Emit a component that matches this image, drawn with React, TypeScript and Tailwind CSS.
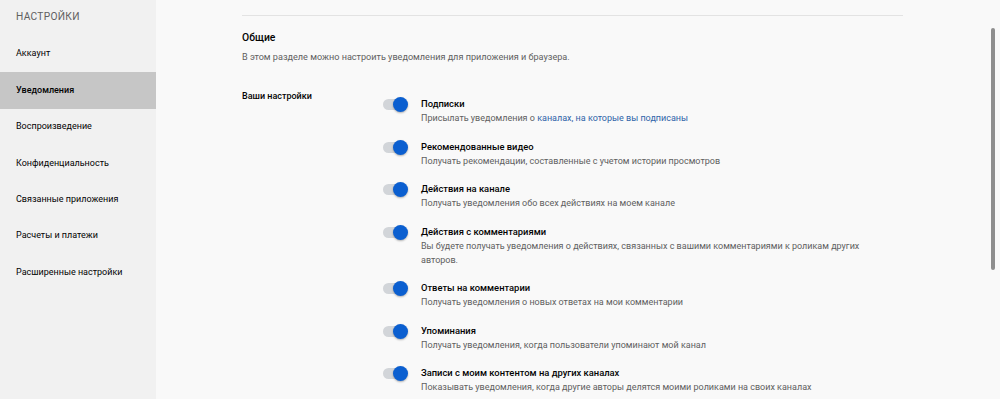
import React from 'react'

const menu = [
  'Аккаунт',
  'Уведомления',
  'Воспроизведение',
  'Конфиденциальность',
  'Связанные приложения',
  'Расчеты и платежи',
  'Расширенные настройки',
]

type Option = { title: string; desc: React.ReactNode }

const options: Option[] = [
  {
    title: 'Подписки',
    desc: (
      <>
        Присылать уведомления о{' '}
        <span className="text-[#2f63a8]">каналах, на которые вы подписаны</span>
      </>
    ),
  },
  { title: 'Рекомендованные видео', desc: 'Получать рекомендации, составленные с учетом истории просмотров' },
  { title: 'Действия на канале', desc: 'Получать уведомления обо всех действиях на моем канале' },
  {
    title: 'Действия с комментариями',
    desc: 'Вы будете получать уведомления о действиях, связанных с вашими комментариями к роликам других авторов.',
  },
  { title: 'Ответы на комментарии', desc: 'Получать уведомления о новых ответах на мои комментарии' },
  { title: 'Упоминания', desc: 'Получать уведомления, когда пользователи упоминают мой канал' },
  {
    title: 'Записи с моим контентом на других каналах',
    desc: 'Показывать уведомления, когда другие авторы делятся моими роликами на своих каналах',
  },
]

function Toggle() {
  // track + knob, always on in the screenshot
  return (
    <div className="relative mt-[1px] h-[15px] w-[25px]">
      <div className="absolute left-0 right-[3px] top-[2px] h-[11px] rounded-full bg-[#d2d5d9]" />
      <div className="absolute right-0 top-0 h-[15px] w-[15px] rounded-full bg-[#0b5fd0] shadow-[0_1px_2px_rgba(0,0,0,0.3)]" />
    </div>
  )
}

export default function App() {
  return (
    <div
      className="flex h-[399px] w-[1000px] overflow-hidden bg-[#f9f9f9]"
      style={{ fontFamily: 'Roboto, "Noto Sans", Arial, sans-serif' }}
    >
      {/* Sidebar */}
      <aside className="w-[156px] shrink-0 bg-[#f1f1f1]">
        <div className="h-[36px] pl-4 pt-[10px] text-[10.2px] leading-[13px] tracking-[0.3px] text-[#606060]">
          НАСТРОЙКИ
        </div>
        {menu.map((item) => {
          const active = item === 'Уведомления'
          return (
            <div
              key={item}
              className={`flex h-[36.4px] items-center pl-4 text-[9px] text-[#030303] ${
                active ? 'bg-[#c6c6c6] font-medium' : ''
              }`}
            >
              {item}
            </div>
          )
        })}
      </aside>

      {/* Main */}
      <main className="flex-1">
        <div className="ml-[86px] w-[661px]">
          <div className="h-[16px] border-b border-[#e3e3e3]" />

          <h2 className="mt-[14px] text-[10.4px] font-medium leading-[16px] text-[#030303]">Общие</h2>
          <p className="mt-[4px] text-[9.1px] leading-[14px] text-[#606060]">
            В этом разделе можно настроить уведомления для приложения и браузера.
          </p>

          <div className="mt-[25px] flex">
            <div className="w-[141px] shrink-0 text-[9px] font-medium leading-[14px] text-[#030303]">
              Ваши настройки
            </div>
            <div className="flex flex-1 flex-col gap-[13.5px] pt-[7px]">
              {options.map((o) => (
                <div key={o.title} className="flex">
                  <div className="w-[38px] shrink-0">
                    <Toggle />
                  </div>
                  <div className="max-w-[462px] flex-1">
                    <div className="text-[9.4px] font-medium leading-[15px] text-[#030303]">{o.title}</div>
                    <div className="text-[9px] leading-[14px] text-[#606060]">{o.desc}</div>
                  </div>
                </div>
              ))}
            </div>
          </div>
        </div>
      </main>

      {/* Scrollbar */}
      <div className="w-[9px] shrink-0">
        <div className="mt-[28px] h-[242px] w-[4px] rounded-full bg-[#8e8e8e]" />
      </div>
    </div>
  )
}
